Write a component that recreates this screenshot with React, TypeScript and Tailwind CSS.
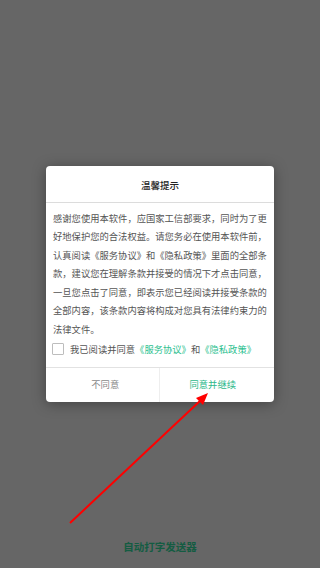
import React, { useState } from 'react'

const font = { fontFamily: '"Noto Sans CJK SC", "Noto Sans", sans-serif' }

const lines = [
  '感谢您使用本软件，应国家工信部要求，同时为了更',
  '好地保护您的合法权益。请您务必在使用本软件前，',
  '认真阅读《服务协议》和《隐私政策》里面的全部条',
  '款，建议您在理解条款并接受的情况下才点击同意，',
  '一旦您点击了同意，即表示您已经阅读并接受条款的',
  '全部内容，该条款内容将构成对您具有法律约束力的',
  '法律文件。',
]

export default function App() {
  const [checked, setChecked] = useState(false)

  return (
    <div className="relative h-[568px] w-full overflow-hidden bg-[#666666]" style={font}>
      {/* page underneath the dim layer */}
      <div className="flex h-full flex-col items-center justify-end pb-[14px]">
        <span className="text-[10.5px] font-bold leading-[14px] text-[#145c42]">自动打字发送器</span>
      </div>

      {/* modal */}
      <div className="absolute inset-0 flex items-center justify-center">
        <div className="w-[228px] rounded-[4px] bg-white shadow-[0_2px_14px_rgba(0,0,0,0.35)]">
          <div className="flex h-[36px] items-center justify-center pt-[3px] text-[9.5px] font-medium text-[#222]">
            温馨提示
          </div>
          <div className="h-px bg-[#dcdcdc]" />

          <div className="px-[7px] pt-[6px] text-[9.3px] leading-[18.4px] text-[#555] whitespace-nowrap">
            {lines.map((l, i) => (
              <div key={i}>{l}</div>
            ))}
          </div>

          <div className="flex items-center px-[6px] pt-[5px] pb-[12px]">
            <button
              onClick={() => setChecked(!checked)}
              className="mr-[6px] h-[12px] w-[12px] rounded-[1px] border border-[#bdbdbd] bg-white"
            />
            <span className="text-[9.3px] leading-[12px] text-[#555] whitespace-nowrap">
              我已阅读并同意
              <span className="text-[#2cbf8f]">《服务协议》</span>
              和
              <span className="text-[#2cbf8f]">《隐私政策》</span>
            </span>
          </div>

          <div className="h-px bg-[#e2e2e2]" />
          <div className="flex h-[34px]">
            <button className="flex flex-1 items-center justify-center pl-[6px] text-[9.3px] text-[#8a8a8a]">不同意</button>
            <div className="w-px bg-[#eeeeee]" />
            <button className="flex flex-1 items-center justify-center pr-[8px] text-[9.3px] text-[#2cb88a]">同意并继续</button>
          </div>
        </div>
      </div>

      {/* annotation arrow */}
      <svg className="pointer-events-none absolute inset-0" width="320" height="568" viewBox="0 0 320 568">
        <line x1="70" y1="523" x2="201" y2="400" stroke="#ff0000" strokeWidth="2" />
        <polygon points="208,393 196,398 203,405" fill="#ff0000" />
      </svg>
    </div>
  )
}
